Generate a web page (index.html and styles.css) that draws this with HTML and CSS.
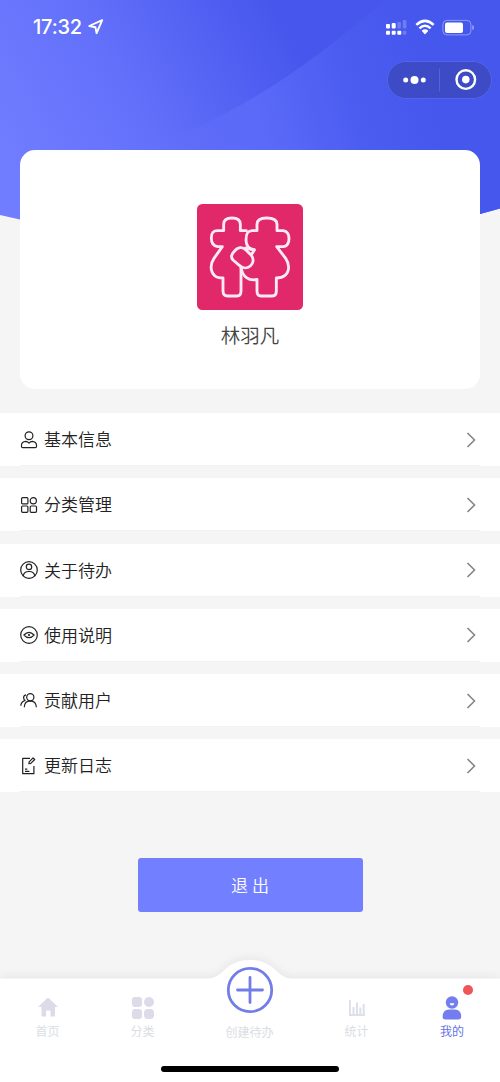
FILE: index.html
```html
<!DOCTYPE html>
<html lang="zh-CN">
<head>
<meta charset="utf-8">
<title>我的</title>
<link rel="stylesheet" href="styles.css">
</head>
<body>
<div class="screen">
  <header class="hero">
    <svg class="hero-bg" viewBox="0 0 500 240" aria-hidden="true">
      <defs>
        <linearGradient id="sky" gradientUnits="userSpaceOnUse" x1="20" y1="180" x2="285" y2="30">
          <stop offset="0" stop-color="#717dff"/><stop offset=".45" stop-color="#6370fa"/><stop offset="1" stop-color="#4757ed"/>
        </linearGradient>
        <linearGradient id="ray" gradientUnits="userSpaceOnUse" x1="170" y1="140" x2="420" y2="70">
          <stop offset="0" stop-color="#6573fb" stop-opacity="0"/><stop offset=".35" stop-color="#5b6af8"/><stop offset=".7" stop-color="#4c5ef1"/><stop offset="1" stop-color="#4557ed"/>
        </linearGradient>
      </defs>
      <path d="M0 0H500V208.500L480 214L250 237L20 219.500L0 215Z" fill="url(#sky)"/>
      <path d="M385 0H500V208.500L480 214L150 237V145C240 115 310 65 385 0Z" fill="url(#ray)"/>
    </svg>
    <div class="status">
      <span class="time">17:32</span>
      <svg class="locate" width="16" height="16" viewBox="0 0 16 16"><path d="M1.200 7L14.200 1.200L8.600 14.200L7.400 8.200Z" fill="none" stroke="#fff" stroke-width="1.900" stroke-linejoin="round"/></svg>
      <svg class="signals" width="90" height="18" viewBox="0 0 90 18">
        <g fill="#fff"><rect x="2" y="6" width="4" height="4.500" rx="1"/><rect x="7.700" y="5" width="4" height="5.500" rx="1"/><rect x="2" y="12.800" width="4" height="4" rx="1"/><rect x="7.700" y="12.800" width="4" height="4" rx="1"/><rect x="13.300" y="12.800" width="4" height="4" rx="1"/></g>
        <g fill="#fff" opacity=".22"><rect x="13.300" y="4" width="3.600" height="6.500" rx="1"/><rect x="18.800" y="2" width="3.600" height="8.500" rx="1"/><rect x="18.800" y="12.800" width="3.600" height="4" rx="1"/></g>
        <g fill="none" stroke="#fff" stroke-width="2.500"><path d="M32.300 6.900Q41 -1.100 49.700 6.900"/><path d="M35.400 10.300Q41 5.100 46.600 10.300"/></g>
        <path d="M37.600 12.800Q41 9.900 44.400 12.800L41 16.500Z" fill="#fff"/>
        <rect x="58.900" y="2.400" width="28" height="14.500" rx="4" fill="none" stroke="#fff" stroke-opacity=".4"/>
        <rect x="61" y="4.500" width="18" height="10.500" rx="2" fill="#fff"/><path d="M88.300 7Q90 7.500 90 9.500Q90 11.500 88.300 12Z" fill="#fff" opacity=".5"/>
      </svg>
    </div>
    <div class="capsule">
      <svg width="103" height="36" viewBox="0 0 103 36"><g fill="#fff"><circle cx="17.700" cy="18" r="2.500"/><circle cx="26.500" cy="18" r="4"/><circle cx="35.300" cy="18" r="2.500"/><circle cx="77.800" cy="17.600" r="3.800"/></g><circle cx="77.800" cy="17.600" r="9.300" fill="none" stroke="#fff" stroke-width="2.400"/><path d="M51.500 6.500V29.500" stroke="#fff" stroke-opacity=".14"/></svg>
    </div>
  </header>

  <section class="profile">
    <svg class="avatar" width="106" height="106" viewBox="-24 -18 318 318">
      <rect x="-24" y="-18" width="318" height="318" rx="16" fill="#e1296a"/>
      <g fill="none" stroke="#ffeaf5" stroke-width="8.500" stroke-linejoin="round" stroke-linecap="round">
        <path d="M124 62H106V43C106 28 96 24 81 24C66 24 56 28 56 43V62H38C22 62 19 70 19 84C19 98 25 108 38 110H52L27 145C15 162 15 185 30 198C36 203 45 204 54 204V243C54 253 59 258 68 258H96C104 258 108 253 108 243V172"/>
        <path d="M148 119C128 117 123 106 123 90C123 70 128 62 142 62H156V43C156 28 168 24 185 24C204 24 216 28 216 43V62H235C248 64 252 72 252 86C252 100 247 108 235 110H215L242 145C254 162 254 185 240 196C232 203 224 204 214 204V243C214 254 210 258 202 258H168C160 258 156 254 156 243V208C132 214 112 200 108 172"/>
        <path d="M122 114L148 120L140 133"/>
        <path d="M88 124C98 110 113 110 123 120L139 136C147 146 146 160 136 168C126 176 113 176 103 166L84 150C76 141 80 132 88 124Z" fill="#e1296a"/>
      </g>
    </svg>
    <div class="name">林羽凡</div>
  </section>

  <nav class="menu">
    <a class="row"><svg class="icon" viewBox="0 0 18 18"><circle cx="9" cy="4.700" r="3.900"/><path d="M1.500 15.500V14Q1.700 10.700 5.800 10.400Q7.500 10.500 9 12.100Q10.500 10.500 12.200 10.400Q16.300 10.700 16.500 14V15.500Q16.500 16.700 15.300 16.700H2.700Q1.500 16.700 1.500 15.500Z"/></svg><span>基本信息</span><svg class="arrow" viewBox="0 0 10 16"><path d="M1.500 1L8.500 8L1.500 15"/></svg></a>
    <a class="row"><svg class="icon" viewBox="0 0 18 18"><rect x="1.600" y="1.600" width="6.300" height="6.300" rx="1"/><circle cx="13.300" cy="4.800" r="3.100"/><rect x="1.600" y="10" width="6.300" height="6.300" rx="1"/><rect x="10.200" y="10" width="6.300" height="6.300" rx="1"/></svg><span>分类管理</span><svg class="arrow" viewBox="0 0 10 16"><path d="M1.500 1L8.500 8L1.500 15"/></svg></a>
    <a class="row"><svg class="icon" viewBox="0 0 18 18"><circle cx="9" cy="9" r="8.300"/><circle cx="9" cy="5.900" r="2.700"/><path d="M3.300 15Q3.700 10.500 9 10.500Q14.300 10.500 14.700 15"/></svg><span>关于待办</span><svg class="arrow" viewBox="0 0 10 16"><path d="M1.500 1L8.500 8L1.500 15"/></svg></a>
    <a class="row"><svg class="icon" viewBox="0 0 18 18"><circle cx="9" cy="9" r="8.300"/><path d="M3.900 9Q9 3.600 14.100 9Q9 14.400 3.900 9Z"/><circle class="solid" cx="9" cy="9" r="1.100"/></svg><span>使用说明</span><svg class="arrow" viewBox="0 0 10 16"><path d="M1.500 1L8.500 8L1.500 15"/></svg></a>
    <a class="row"><svg class="icon" viewBox="0 0 18 18"><circle cx="10.300" cy="5.300" r="3.600"/><path d="M4.300 15.300Q4.400 9 10.300 8.900Q16 9 16.400 15.300M6 2.800Q3.400 3.300 3.600 6Q3.800 8 5.500 8.600M.800 13.800Q1 10 4.600 8.600"/></svg><span>贡献用户</span><svg class="arrow" viewBox="0 0 10 16"><path d="M1.500 1L8.500 8L1.500 15"/></svg></a>
    <a class="row"><svg class="icon" viewBox="0 0 18 18"><path d="M10 1.400H2.700V16.700H13.900V9M5 12.200H7.300M5 14.400H9.400M8.900 6.700L9.200 4.800L13 .900L14.700 2.500L10.800 6.400Z"/></svg><span>更新日志</span><svg class="arrow" viewBox="0 0 10 16"><path d="M1.500 1L8.500 8L1.500 15"/></svg></a>
  </nav>

  <button class="logout">退 出</button>

  <footer class="tabs">
    <svg class="tabs-bg" viewBox="0 0 500 130" aria-hidden="true"><path d="M0 26.500H208C224 26.500 224 8 250 8S276 26.500 292 26.500H500V130H0Z" fill="#fff"/></svg>
    <div class="tab"><svg width="20" height="20" viewBox="0 0 20 20"><path d="M10 .500L20 10H17V19.500H12.500V13.500H8V19.500H3.500V10H0Z" fill="#dcdbe9"/></svg><span>首页</span></div>
    <div class="tab"><svg width="22" height="22" viewBox="0 0 22 22" fill="#dcdbe9"><rect x="0" y="0" width="10" height="10" rx="3"/><circle cx="17" cy="5" r="5"/><rect x="0" y="12" width="10" height="10" rx="3"/><rect x="12" y="12" width="10" height="10" rx="4"/></svg><span>分类</span></div>
    <div class="tab create"><svg width="48" height="48" viewBox="0 0 48 48"><circle cx="24" cy="24" r="21.700"/><path d="M24 11.500V36.500M11.500 24H36.500"/></svg><span>创建待办</span></div>
    <div class="tab stats"><svg width="16" height="16" viewBox="0 0 16 16"><path d="M.900 0V15H16M4.500 7V15M8 2.500V15M11.300 7.500V15M14.700 4V15" fill="none" stroke="#dce0ea" stroke-width="2"/></svg><span>统计</span></div>
    <div class="tab active"><svg width="20" height="24" viewBox="0 0 20 24"><circle cx="10" cy="6.500" r="6.200" fill="#737df0"/><path d="M7.700 7.200H12.300Q12 9.500 10 9.500Q8 9.500 7.700 7.200Z" fill="#fff"/><path d="M.600 21Q.600 13.500 7 13.500H13Q19.200 13.500 19.200 21Q19 23.500 16.500 23.500H3.500Q.700 23.500 .600 21Z" fill="#737df0"/></svg><span>我的</span><i class="badge"></i></div>
    <div class="home-bar"></div>
  </footer>
</div>
</body>
</html>
```

FILE: styles.css
```css
* { box-sizing: border-box; }
body { margin: 0; background: #f5f5f5; font-family: "Noto Sans CJK SC", sans-serif; }
svg { display: block; flex: none; }
.screen { width: 500px; height: 1082px; display: flex; flex-direction: column; overflow: hidden; }
.hero { position: relative; height: 150px; flex: none; }
.hero-bg { position: absolute; top: 0; left: 0; width: 500px; height: 240px; }
.status { position: relative; display: flex; align-items: center; height: 54px; padding: 0 26px 0 33px; color: #fff; }
.time { width: 49px; font: 500 20px/24px Inter, sans-serif; letter-spacing: -.2px; white-space: nowrap; }
.locate { margin-left: 6px; }
.signals { margin-left: auto; }
.capsule { position: relative; width: 105px; height: 38px; margin: 7px 8px 0 auto; border: 1px solid #5564e2; border-radius: 19px; background: #3d4bc6; }
.profile { position: relative; flex: none; display: flex; flex-direction: column; align-items: center; height: 239px; margin: 0 20px; padding-top: 54px; border-radius: 15px; background: #fff; }
.name { margin-top: 10px; font-size: 19.5px; line-height: 30px; font-weight: 350; color: #444; }
.menu { flex: none; display: flex; flex-direction: column; gap: 12.25px; margin-top: 24px; }
.row { position: relative; display: flex; align-items: center; height: 53px; padding: 0 24px 0 20px; background: #fff; color: #222; font-size: 17px; line-height: 26px; }
.row::after { content: ""; position: absolute; left: 20px; right: 20px; bottom: 0; height: 1px; background: #f2f2f2; }
.row span { margin: 0 0 1px 6px; font-weight: 350; }
.icon { width: 18px; height: 18px; fill: none; stroke: #222; stroke-width: 1.2; stroke-linejoin: round; }
.icon .solid { fill: #222; stroke: none; }
.arrow { width: 10px; height: 16px; margin-left: auto; fill: none; stroke: #858585; stroke-width: 1.6; }
.logout { flex: none; align-self: center; width: 225px; height: 54px; margin-top: 66px; padding: 0; border: 0; border-radius: 3px; background: #7280ff; color: #fff; font: 350 17px/26px "Noto Sans CJK SC", sans-serif; }
.tabs { position: relative; display: grid; grid-template-columns: 95px 95px 119px 95px 96px; align-items: start; flex: none; height: 130px; margin-top: auto; }
.tabs-bg { position: absolute; inset: 0; width: 500px; height: 130px; overflow: visible; filter: drop-shadow(0 -2px 4px rgba(0, 0, 0, .06)); }
.tab { position: relative; display: flex; flex-direction: column; align-items: center; height: 88px; padding-top: 45px; color: #dadde3; font-size: 12px; line-height: 18px; }
.tab span { margin-top: auto; }
.create { height: 89px; padding-top: 14px; }
.create svg { fill: #fff; stroke: #737de8; stroke-width: 2.8; stroke-linecap: round; }
.stats { padding-top: 48px; }
.active { padding-top: 44px; color: #6672e3; }
.badge { position: absolute; top: 33px; left: 59px; width: 10px; height: 10px; border-radius: 50%; background: #ee5658; }
.home-bar { position: absolute; left: 161px; bottom: 10px; width: 178px; height: 6px; border-radius: 3px; background: #000; }
```
